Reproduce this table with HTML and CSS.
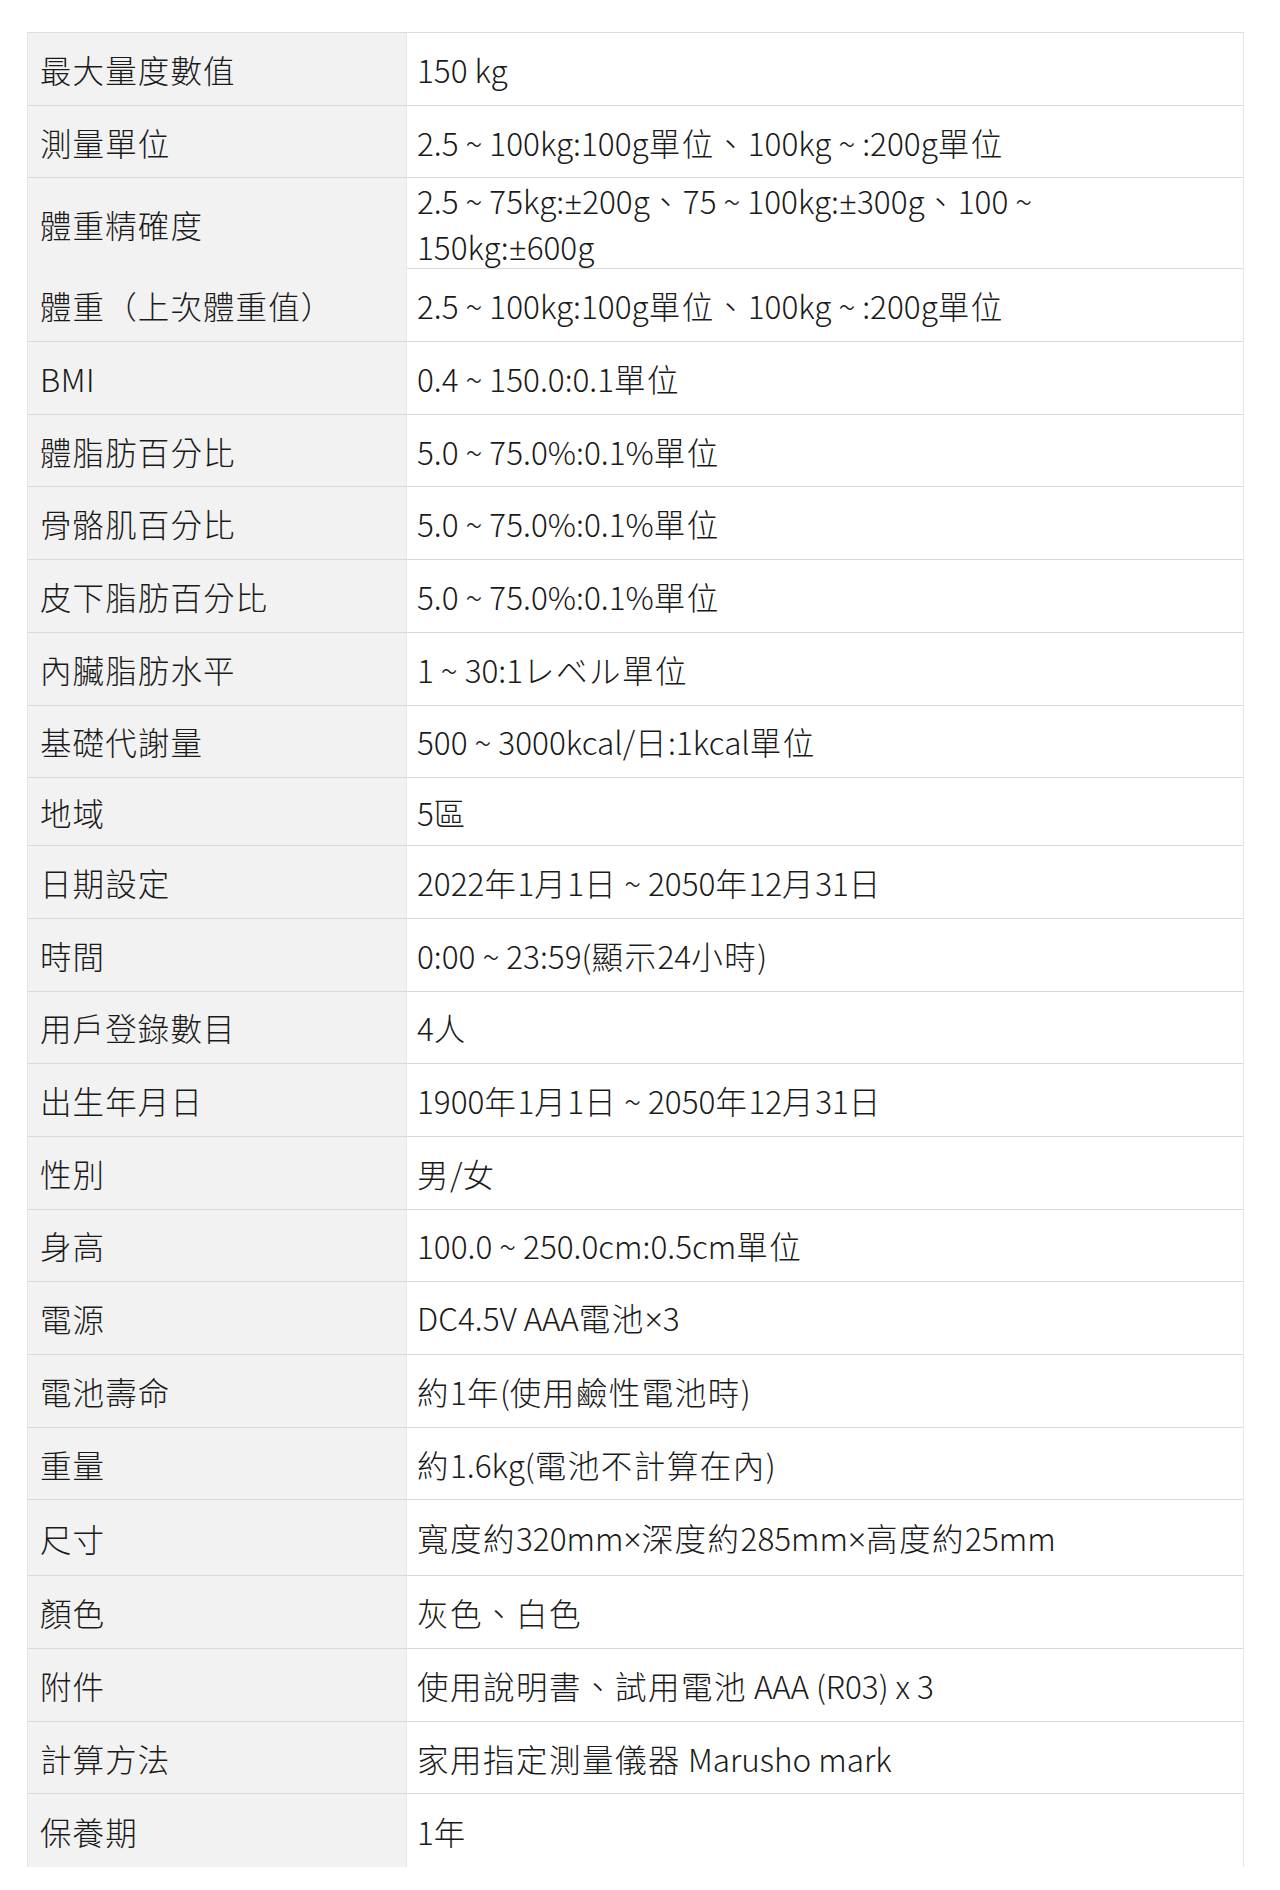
FILE: index.html
```html
<!DOCTYPE html>
<html lang="zh-Hant">
<head>
<meta charset="utf-8">
<title>規格</title>
<link rel="stylesheet" href="styles.css">
</head>
<body>
<div class="spec">
  <div class="row"><div class="label">最大量度數值</div><div class="value"><span class="t">150 kg</span></div></div>
  <div class="row"><div class="label">測量單位</div><div class="value"><span class="t">2.5 ~ 100kg:100g<span class="c">單位、</span>100kg ~ :200g<span class="c">單位</span></span></div></div>
  <div class="row tall"><div class="label">體重精確度</div><div class="value"><span class="t two">2.5 ~ 75kg:<span class="sym">±</span>200g<span class="c">、</span>75 ~ 100kg:<span class="sym">±</span>300g<span class="c">、</span>100 ~<br>150kg:<span class="sym">±</span>600g</span></div></div>
  <div class="row"><div class="label">體重（上次體重值）</div><div class="value"><span class="t">2.5 ~ 100kg:100g<span class="c">單位、</span>100kg ~ :200g<span class="c">單位</span></span></div></div>
  <div class="row"><div class="label latin">BMI</div><div class="value"><span class="t">0.4 ~ 150.0:0.1<span class="c">單位</span></span></div></div>
  <div class="row"><div class="label">體脂肪百分比</div><div class="value"><span class="t">5.0 ~ 75.0%:0.1%<span class="c">單位</span></span></div></div>
  <div class="row"><div class="label">骨骼肌百分比</div><div class="value"><span class="t">5.0 ~ 75.0%:0.1%<span class="c">單位</span></span></div></div>
  <div class="row"><div class="label">皮下脂肪百分比</div><div class="value"><span class="t">5.0 ~ 75.0%:0.1%<span class="c">單位</span></span></div></div>
  <div class="row"><div class="label">內臟脂肪水平</div><div class="value"><span class="t">1 ~ 30:1<span class="c">レベル單位</span></span></div></div>
  <div class="row"><div class="label">基礎代謝量</div><div class="value"><span class="t">500 ~ 3000kcal/<span class="c">日</span>:1kcal<span class="c">單位</span></span></div></div>
  <div class="row short"><div class="label">地域</div><div class="value"><span class="t">5<span class="c">區</span></span></div></div>
  <div class="row"><div class="label">日期設定</div><div class="value"><span class="t">2022<span class="c">年</span>1<span class="c">月</span>1<span class="c">日</span> ~ 2050<span class="c">年</span>12<span class="c">月</span>31<span class="c">日</span></span></div></div>
  <div class="row"><div class="label">時間</div><div class="value"><span class="t">0:00 ~ 23:59(<span class="c">顯示</span>24<span class="c">小時</span>)</span></div></div>
  <div class="row"><div class="label">用戶登錄數目</div><div class="value"><span class="t">4<span class="c">人</span></span></div></div>
  <div class="row"><div class="label">出生年月日</div><div class="value"><span class="t">1900<span class="c">年</span>1<span class="c">月</span>1<span class="c">日</span> ~ 2050<span class="c">年</span>12<span class="c">月</span>31<span class="c">日</span></span></div></div>
  <div class="row"><div class="label">性別</div><div class="value"><span class="t"><span class="c">男</span>/<span class="c">女</span></span></div></div>
  <div class="row"><div class="label">身高</div><div class="value"><span class="t">100.0 ~ 250.0cm:0.5cm<span class="c">單位</span></span></div></div>
  <div class="row"><div class="label">電源</div><div class="value"><span class="t">DC4.5V AAA<span class="c">電池</span><span class="sym">×</span>3</span></div></div>
  <div class="row"><div class="label">電池壽命</div><div class="value"><span class="t"><span class="c">約</span>1<span class="c">年</span>(<span class="c">使用鹼性電池時</span>)</span></div></div>
  <div class="row"><div class="label">重量</div><div class="value"><span class="t"><span class="c">約</span>1.6kg(<span class="c">電池不計算在內</span>)</span></div></div>
  <div class="row wide"><div class="label">尺寸</div><div class="value"><span class="t"><span class="c">寬度約</span>320mm<span class="sym">×</span><span class="c">深度約</span>285mm<span class="sym">×</span><span class="c">高度約</span>25mm</span></div></div>
  <div class="row"><div class="label">顏色</div><div class="value"><span class="t"><span class="c">灰色、白色</span></span></div></div>
  <div class="row"><div class="label">附件</div><div class="value"><span class="t"><span class="c">使用說明書、試用電池</span> AAA (R03) x 3</span></div></div>
  <div class="row"><div class="label">計算方法</div><div class="value"><span class="t"><span class="c">家用指定測量儀器</span> Marusho mark</span></div></div>
  <div class="row last"><div class="label">保養期</div><div class="value"><span class="t">1<span class="c">年</span></span></div></div>
</div>
</body>
</html>
```

FILE: styles.css
```css
html, body {
  margin: 0;
  padding: 0;
  background: #ffffff;
}

body {
  font-family: "Noto Sans CJK TC", "Noto Sans", sans-serif;
  font-weight: 300;
  color: #1a1a1a;
  font-size: 31.5px;
  line-height: 38px;
  text-spacing-trim: space-all;
}

.spec {
  margin: 32px 36px 0 27px;
  border-top: 1px solid #dedede;
  border-left: 1px solid #e4e4e4;
  border-right: 1px solid #e4e4e4;
}

.row {
  display: grid;
  grid-template-columns: 379px 1fr;
  height: 72.7px;
  box-sizing: border-box;
  border-bottom: 1px solid #d9d9d9;
}

.row.tall { height: 91px; }
.row.short { height: 68px; }
.row.wide { height: 76px; }
.row.last { border-bottom: none; }

.label {
  background: #f2f2f2;
  border-right: 1px solid #e6e6e6;
  padding: 0 12px;
  display: flex;
  align-items: center;
  letter-spacing: 1.1px;
}

.label.latin {
  letter-spacing: 0.5px;
}

.value {
  padding: 0 40px 0 10px;
  display: flex;
  align-items: center;
}

.t {
  display: block;
}

.t.two {
  line-height: 45px;
}

.c {
  letter-spacing: 1.5px;
}

.sym {
  font-family: "Noto Sans", "DejaVu Sans", sans-serif;
  letter-spacing: 0;
}
```
